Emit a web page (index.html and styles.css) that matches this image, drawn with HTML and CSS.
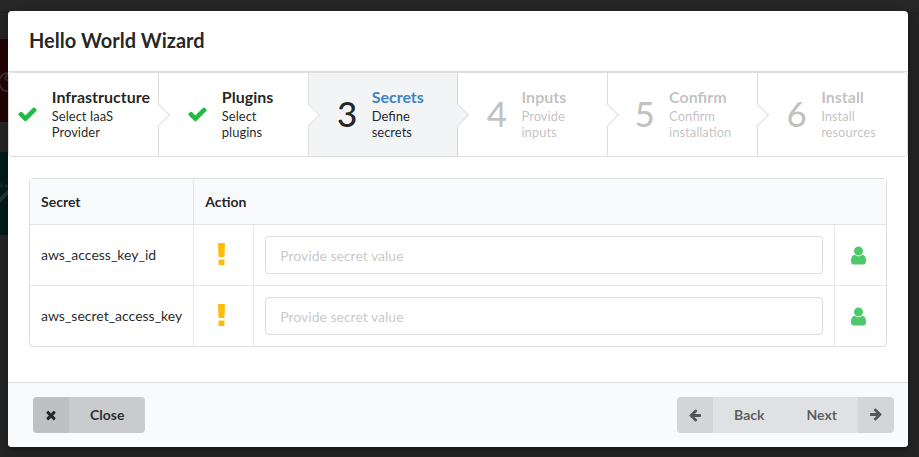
FILE: index.html
```html
<!DOCTYPE html>
<html lang="en">
<head>
  <meta charset="UTF-8">
  <title>Hello World Wizard</title>
  <meta name="viewport" content="width=device-width, initial-scale=1">
  <link rel="stylesheet" href="styles.css">
</head>
<body>
  <svg class="sprite" aria-hidden="true">
    <symbol id="check" viewBox="0 0 1792 1792"><path d="M1671 566q0 40-28 68l-724 724-136 136q-28 28-68 28t-68-28l-136-136-362-362q-28-28-28-68t28-68l136-136q28-28 68-28t68 28l294 295 656-657q28-28 68-28t68 28l136 136q28 28 28 68z"/></symbol>
    <symbol id="remove" viewBox="0 0 1792 1792"><path d="M1490 1322q0 40-28 68l-136 136q-28 28-68 28t-68-28l-294-294-294 294q-28 28-68 28t-68-28l-136-136q-28-28-28-68t28-68l294-294-294-294q-28-28-28-68t28-68l136-136q28-28 68-28t68 28l294 294 294-294q28-28 68-28t68 28l136 136q28 28 28 68t-28 68l-294 294 294 294q28 28 28 68z"/></symbol>
    <symbol id="arrow" viewBox="0 0 1792 1792"><path d="M1664 896v128q0 53-32.5 90.5t-84.5 37.5h-704l293 294q38 36 38 90t-38 90l-75 76q-37 37-90 37-52 0-91-37l-651-652q-37-37-37-90 0-52 37-91l651-650q38-38 91-38 52 0 90 38l75 74q38 38 38 91t-38 91l-293 293h704q52 0 84.5 37.5t32.5 90.5z"/></symbol>
    <symbol id="user" viewBox="0 0 1792 1792"><path d="M1536 1399q0 109-62.5 187t-150.5 78h-854q-88 0-150.5-78t-62.5-187q0-85 8.5-160.5t31.5-152 58.5-131 94-89 134.5-34.5q131 128 313 128t313-128q76 0 134.5 34.5t94 89 58.5 131 31.5 152 8.5 160.5zm-256-887q0 159-112.5 271.5t-271.5 112.5-271.5-112.5-112.5-271.5 112.5-271.5 271.5-112.5 271.5 112.5 112.5 271.5z"/></symbol>
    <symbol id="exclamation" viewBox="0 0 1792 1792"><path d="M1088 1248v224q0 26-19 45t-45 19h-256q-26 0-45-19t-19-45v-224q0-26 19-45t45-19h256q26 0 45 19t19 45zm30-1056l-28 768q-1 26-20.5 45t-45.5 19h-256q-26 0-45.5-19t-20.5-45l-28-768q-1-26 17.5-45t44.5-19h320q26 0 44.5 19t17.5 45z"/></symbol>
  </svg>

  <!-- dimmed page behind the modal -->
  <div class="backdrop" aria-hidden="true">
    <div class="topbar"></div>
    <div class="tile red">
      <svg width="8" height="83" viewBox="0 0 8 83"><path d="M8 34a9 9 0 0 0-8 13q3 6 8 5M8 35l-3 4 3 3" fill="none" stroke="#3a2c2c" stroke-width="2"/></svg>
    </div>
    <div class="tile teal">
      <svg width="8" height="83" viewBox="0 0 8 83"><path d="M-1 49l11-11" stroke="#263434" stroke-width="4"/><path d="M2 31v5M0 34h4M6 32v4M5 34h3" stroke="#263434"/></svg>
    </div>
  </div>

  <div class="modal" role="dialog" aria-labelledby="wizard-title">
    <h1 class="header" id="wizard-title">Hello World Wizard</h1>

    <div class="steps">
      <div class="step completed">
        <svg class="mark"><use href="#check"/></svg>
        <div class="content">
          <div class="title">Infrastructure</div>
          <div class="description">Select IaaS Provider</div>
        </div>
      </div>
      <div class="step completed">
        <svg class="mark"><use href="#check"/></svg>
        <div class="content">
          <div class="title">Plugins</div>
          <div class="description">Select plugins</div>
        </div>
      </div>
      <div class="step active">
        <div class="mark">3</div>
        <div class="content">
          <div class="title">Secrets</div>
          <div class="description">Define secrets</div>
        </div>
      </div>
      <div class="step disabled">
        <div class="mark">4</div>
        <div class="content">
          <div class="title">Inputs</div>
          <div class="description">Provide inputs</div>
        </div>
      </div>
      <div class="step disabled">
        <div class="mark">5</div>
        <div class="content">
          <div class="title">Confirm</div>
          <div class="description">Confirm installation</div>
        </div>
      </div>
      <div class="step disabled">
        <div class="mark">6</div>
        <div class="content">
          <div class="title">Install</div>
          <div class="description">Install resources</div>
        </div>
      </div>
    </div>

    <div class="body">
      <table class="secrets">
        <thead>
          <tr>
            <th class="name">Secret</th>
            <th colspan="3">Action</th>
          </tr>
        </thead>
        <tbody>
          <tr>
            <td><label for="aws_access_key_id">aws_access_key_id</label></td>
            <td class="status"><svg class="warning"><use href="#exclamation"/></svg></td>
            <td class="value"><input type="text" id="aws_access_key_id" placeholder="Provide secret value"></td>
            <td class="scope"><svg class="user"><use href="#user"/></svg></td>
          </tr>
          <tr>
            <td><label for="aws_secret_access_key">aws_secret_access_key</label></td>
            <td class="status"><svg class="warning"><use href="#exclamation"/></svg></td>
            <td class="value"><input type="text" id="aws_secret_access_key" placeholder="Provide secret value"></td>
            <td class="scope"><svg class="user"><use href="#user"/></svg></td>
          </tr>
        </tbody>
      </table>
    </div>

    <div class="actions">
      <button type="button" class="button close"><span class="icon"><svg><use href="#remove"/></svg></span><span class="text">Close</span></button>
      <div class="buttons">
        <button type="button" class="button"><span class="icon"><svg><use href="#arrow"/></svg></span><span class="text">Back</span></button>
        <button type="button" class="button next"><span class="icon"><svg><use href="#arrow"/></svg></span><span class="text">Next</span></button>
      </div>
    </div>
  </div>
</body>
</html>
```
FILE: styles.css
```css
* {
  box-sizing: border-box;
}
body {
  margin: 0;
  padding: 11px 11px 10px 8px;
  background: #252525;
  color: rgba(0, 0, 0, 0.87);
  font-family: Lato, "Liberation Sans", sans-serif;
  font-size: 14px;
  line-height: 18px;
}
svg {
  display: block;
  fill: currentColor;
}
.sprite {
  display: none;
}

/* page behind the modal */
.backdrop {
  position: absolute;
  inset: 0;
}
.topbar {
  height: 13px;
  margin-bottom: 26px;
  background: #272727;
  border-bottom: 1px solid #202020;
}
.tile {
  width: 100px;
  height: 83px;
  margin-bottom: 30px;
}
.red {
  background: #240404;
}
.teal {
  background: #001a1a;
}

.modal {
  position: relative;
  background: #fff;
  border-radius: 4px;
  box-shadow: 1px 3px 3px 0 rgba(0, 0, 0, 0.2), 1px 3px 15px 2px rgba(0, 0, 0, 0.2);
  overflow: hidden;
}
.header {
  margin: 0;
  padding: 16px 21px 18px;
  border-bottom: 1px solid rgba(34, 36, 38, 0.15);
  font-size: 20px;
  line-height: 26px;
  font-weight: 700;
}

/* steps */
.steps {
  display: flex;
  border: 1px solid rgba(34, 36, 38, 0.15);
  border-radius: 4px;
}
.step {
  position: relative;
  flex: 1 1 0;
  min-width: 0;
  display: flex;
  align-items: center;
  justify-content: center;
  padding: 15px 28px 16px;
  background: #fff;
  border-right: 1px solid rgba(34, 36, 38, 0.15);
}
.step:first-child {
  border-radius: 4px 0 0 4px;
}
.step:last-child {
  border-right: 0;
  border-radius: 0 4px 4px 0;
}
.step:not(:last-child)::after {
  content: "";
  position: absolute;
  z-index: 2;
  top: 50%;
  right: 0;
  width: 16px;
  height: 16px;
  background: inherit;
  border: solid #dededf;
  border-width: 0 1px 1px 0;
  transform: translate(50%, -50%) rotate(-45deg);
}
.mark {
  flex: none;
  width: 21px;
  height: 22px;
  margin-right: 14px;
  font-size: 35px;
  line-height: 20px;
  font-weight: 500;
  text-align: center;
}
.completed .mark {
  color: #21ba45;
}
.title {
  font-size: 16px;
  font-weight: 700;
}
.description {
  margin-top: 2px;
  font-size: 13px;
  line-height: 16px;
}
.active {
  background: #f3f4f5;
}
.active .title {
  color: #4183c4;
}
.disabled {
  color: rgba(40, 40, 40, 0.3);
}

/* secrets table */
.body {
  padding: 21px 21px 35px;
}
.secrets {
  width: 100%;
  border: 1px solid rgba(34, 36, 38, 0.15);
  border-radius: 4px;
  border-collapse: separate;
  border-spacing: 0;
}
.secrets th {
  padding: 14px 11px 13px;
  background: #f9fafb;
  border-bottom: 1px solid rgba(34, 36, 38, 0.1);
  text-align: left;
  font-weight: 700;
}
.secrets td {
  padding: 11px;
}
.secrets tr + tr td {
  border-top: 1px solid rgba(34, 36, 38, 0.1);
}
.secrets th + th,
.secrets td + td {
  border-left: 1px solid rgba(34, 36, 38, 0.1);
}
.name {
  width: 162px;
}
.status {
  width: 60px;
}
.value {
  width: auto;
}
.scope {
  width: 52px;
}
.warning {
  width: 33px;
  height: 28px;
  color: #fbbd08;
}
.user {
  width: 25px;
  height: 21px;
  color: #4dc86a;
}
.value input {
  display: block;
  width: 100%;
  height: 38px;
  padding: 9px 14px;
  border: 1px solid rgba(34, 36, 38, 0.15);
  border-radius: 4px;
  font: inherit;
}
.value input::placeholder {
  color: rgba(191, 191, 191, 0.87);
}

/* footer */
.actions {
  display: flex;
  justify-content: space-between;
  padding: 14px 14px 14px 25px;
  background: #f9fafb;
  border-top: 1px solid rgba(34, 36, 38, 0.15);
}
.buttons {
  display: flex;
}
.button {
  display: flex;
  padding: 0;
  border: 0;
  border-radius: 4px;
  background: #e0e1e2;
  color: rgba(0, 0, 0, 0.6);
  font: inherit;
  font-weight: 700;
  line-height: 36px;
  overflow: hidden;
}
.button .icon {
  padding: 11px;
  background: rgba(0, 0, 0, 0.05);
}
.button svg {
  width: 14px;
  height: 14px;
}
.button .text {
  padding: 0 21px;
}
.close {
  background: #cacbcd;
  color: rgba(0, 0, 0, 0.8);
}
.buttons .button {
  border-radius: 4px 0 0 4px;
}
.buttons .next {
  flex-direction: row-reverse;
  border-radius: 0 4px 4px 0;
}
.next svg {
  transform: rotate(180deg);
}
```
